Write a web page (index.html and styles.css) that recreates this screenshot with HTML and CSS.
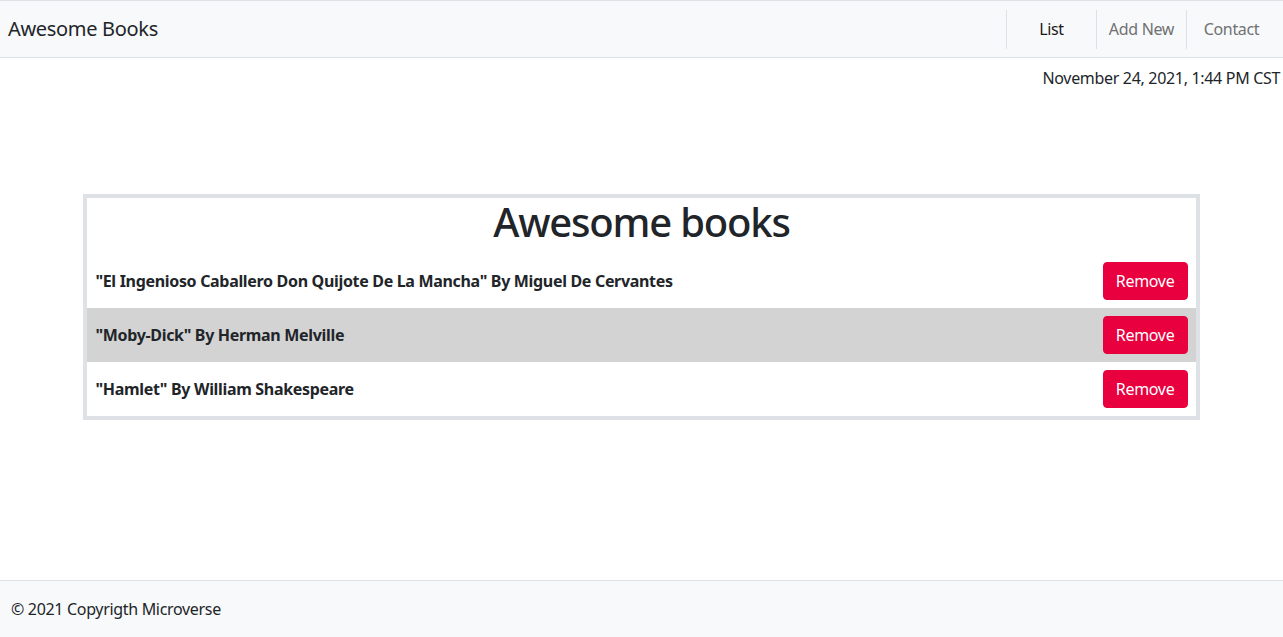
FILE: index.html
```html
<!DOCTYPE html>
<html lang="en">
<head>
<meta charset="utf-8">
<title>Awesome Books</title>
<link rel="stylesheet" href="styles.css">
</head>
<body>
<header class="navbar">
  <a class="brand" href="#">Awesome Books</a>
  <nav class="nav">
    <a class="nav-link active" href="#">List</a>
    <a class="nav-link" href="#">Add New</a>
    <a class="nav-link" href="#">Contact</a>
  </nav>
</header>
<main class="main">
  <p class="date">November 24, 2021, 1:44 PM CST</p>
  <section class="card">
    <h1 class="title">Awesome books</h1>
    <ul class="books">
      <li class="book"><span class="book-name">"El Ingenioso Caballero Don Quijote De La Mancha" By Miguel De Cervantes</span><button class="btn-remove">Remove</button></li>
      <li class="book alt"><span class="book-name">"Moby-Dick" By Herman Melville</span><button class="btn-remove">Remove</button></li>
      <li class="book"><span class="book-name">"Hamlet" By William Shakespeare</span><button class="btn-remove">Remove</button></li>
    </ul>
  </section>
</main>
<footer class="footer">
  <p class="copy">© 2021 Copyrigth Microverse</p>
</footer>
</body>
</html>
```
FILE: styles.css
```css
* { box-sizing: border-box; }
html, body { height: 100%; }
body {
  margin: 0;
  font-family: "Noto Sans", "DejaVu Sans", sans-serif;
  font-size: 16px;
  line-height: 1.5;
  letter-spacing: -0.02em;
  color: #212529;
  background: #fff;
  display: flex;
  flex-direction: column;
  min-height: 100vh;
}
a { text-decoration: none; }
.navbar {
  display: flex;
  align-items: center;
  justify-content: space-between;
  height: 58px;
  background: #f8f9fa;
  border-top: 1px solid #dee2e6;
  border-bottom: 1px solid #dee2e6;
  padding: 0 7px 0 8px;
}
.brand {
  font-size: 20px;
  color: #212529;
  line-height: 30px;
}
.nav {
  display: flex;
  align-items: center;
}
.nav-link {
  width: 90px;
  text-align: center;
  color: #707172;
  border-left: 1px solid #dee2e6;
  line-height: 39px;
  font-size: 16px;
}
.nav-link.active { color: #1a1a1a; }
.main { flex: 1; }
.date {
  margin: 8px 0 0;
  text-align: right;
  padding-right: 3px;
  line-height: 24px;
}
.card {
  width: 87%;
  margin: 104px auto 0;
  border: 4px solid #dee2e6;
}
.title {
  margin: 0 0 8px;
  font-size: 40px;
  font-weight: 500;
  line-height: 48px;
  letter-spacing: -0.03em;
  text-align: center;
}
.books { list-style: none; margin: 0; padding: 0; }
.book {
  display: flex;
  align-items: center;
  justify-content: space-between;
  padding: 8px;
}
.book.alt { background: #d3d3d3; }
.book-name { font-weight: 700; }
.btn-remove {
  font-family: inherit;
  font-size: 16px;
  letter-spacing: inherit;
  line-height: 24px;
  padding: 6px 12px;
  border: 1px solid #e8003f;
  background: #e8003f;
  color: #fff;
  border-radius: 4px;
  width: 85px;
  height: 38px;
}
.footer {
  height: 57px;
  background: #f8f9fa;
  border-top: 1px solid #dee2e6;
  display: flex;
  align-items: center;
  padding: 0 11px;
}
.copy { margin: 0; }
```
